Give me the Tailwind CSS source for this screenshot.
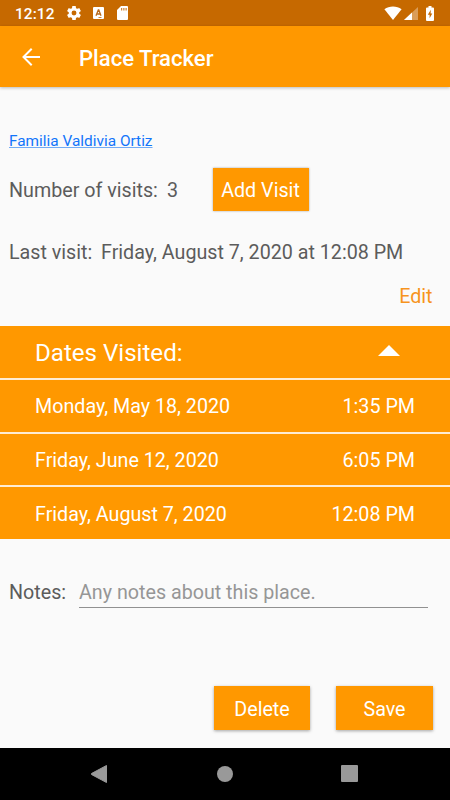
<!DOCTYPE html>
<html lang="en">
<head>
<meta charset="utf-8">
<title>Place Tracker</title>
<script src="https://cdn.jsdelivr.net/npm/@tailwindcss/browser@4"></script>
</head>
<body class="w-[450px] h-[800px] overflow-hidden bg-[#fafafa] font-['Roboto',sans-serif] text-[19.7px] leading-6 text-[#5c5c5c] flex flex-col">
<header class="h-[26px] shrink-0 bg-[#c66900] text-white flex items-center pl-[15px] pr-[16px]">
  <span class="text-[15.4px] font-medium leading-5 tracking-[0.1px] w-[52px] pt-[2px]">12:12</span>
  <svg class="w-[14px] h-[14px] shrink-0" viewBox="2 2 20 20" fill="currentColor"><path d="M19.43 12.98c.04-.32.07-.64.07-.98s-.03-.66-.07-.98l2.11-1.65c.19-.15.24-.42.12-.64l-2-3.46c-.12-.22-.39-.3-.61-.22l-2.49 1c-.52-.4-1.08-.73-1.69-.98l-.38-2.65C14.46 2.18 14.25 2 14 2h-4c-.25 0-.46.18-.49.42l-.38 2.65c-.61.25-1.17.59-1.69.98l-2.49-1c-.23-.09-.49 0-.61.22l-2 3.46c-.13.22-.07.49.12.64l2.11 1.65c-.04.32-.07.65-.07.98s.03.66.07.98l-2.11 1.65c-.19.15-.24.42-.12.64l2 3.46c.12.22.39.3.61.22l2.49-1c.52.4 1.08.73 1.69.98l.38 2.65c.03.24.24.42.49.42h4c.25 0 .46-.18.49-.42l.38-2.65c.61-.25 1.17-.59 1.69-.98l2.49 1c.23.09.49 0 .61-.22l2-3.46c.12-.22.07-.49-.12-.64zM12 15.5a3.5 3.5 0 1 1 0-7 3.5 3.5 0 0 1 0 7z"/></svg>
  <svg class="w-[11px] h-[12px] ml-[12px] shrink-0" viewBox="0 0 11 12"><rect width="11" height="12" rx="1" fill="#fff"/><path d="M3 8.7 5.3 3h.5L8 8.700M3.9 7h3.200" fill="none" stroke="#b86a1c" stroke-width="1.300"/><path d="M5.500 10.500h3" stroke="#c66900" stroke-width=".8"/></svg>
  <svg class="w-[11px] h-[14px] ml-[13px] shrink-0" viewBox="0 0 11 14"><path d="M4 0h6q1 0 1 1v12q0 1-1 1H1q-1 0-1-1V4z" fill="#fff"/><path d="M4.700 2v2.500M6.900 2v2.500M9.100 2v2.500" stroke="#c66900" stroke-width="1"/></svg>
  <svg class="w-[18px] h-[14px] ml-auto shrink-0" viewBox="0 0 18 14" fill="currentColor"><path d="M.4 3.300C5.300-.5 12.700-.5 17.600 3.300L9 14z"/></svg>
  <svg class="w-[14px] h-[13px] ml-[2px] mt-[1px] shrink-0" viewBox="0 0 14 13"><path d="M14 0v13H0z" fill="#fff" opacity=".35"/><path d="M8 5.570V13H0z" fill="#fff"/></svg>
  <svg class="w-[8px] h-[15px] ml-[8.500px] shrink-0" viewBox="0 0 8 15"><path d="M2.500 0h3v1.400H7q1 0 1 1V14q0 1-1 1H1q-1 0-1-1V2.400q0-1 1-1h1.500z" fill="#fff"/><path d="M4.800 3.800 1.800 8.700h1.800v3.600L6.300 7.500H4.600z" fill="#c66900"/></svg>
</header>
<div class="h-[61px] shrink-0 bg-[#ff9800] text-white flex items-center pl-[22px] shadow-[0_1px_3px_rgba(0,0,0,0.25)]">
  <svg class="w-[18px] h-[18px]" viewBox="0 0 18 18" fill="none" stroke="currentColor" stroke-width="2"><path d="M18 9H1.500M9.700.8 1.500 9l8.200 8.200"/></svg>
  <h1 class="ml-[39px] text-[22.1px] leading-7 font-medium whitespace-nowrap pt-[3px]"><span>Place Tracker</span></h1>
</div>
<main class="h-[661px] shrink-0 flex flex-col">
  <a class="mt-[44px] ml-[9px] h-5 leading-5 text-[15.4px] text-[#1275fa] self-start underline decoration-1 underline-offset-1 decoration-[#1877f2]/60">Familia Valdivia Ortiz</a>
  <div class="mt-[16px] pl-[9px] h-11 flex items-center">
    <span class="w-[158px] pt-[3px]">Number of visits:</span>
    <span class="w-[45.500px] pt-[3px]">3</span>
    <button class="w-[96px] h-[43px] pt-[3px] bg-[#ff9800] text-white shadow-[0_0_2px_rgba(0,0,0,0.35)]">Add Visit</button>
  </div>
  <div class="mt-[30px] pl-[9px] h-6 flex whitespace-nowrap">
    <span class="w-[92px]">Last visit:</span>
    <span>Friday, August 7, 2020 at 12:08 PM</span>
  </div>
  <a class="mt-[20px] mr-[17.500px] self-end text-[#f7941d] h-6">Edit</a>
  <section class="mt-[17px] bg-[#ff9800] text-white divide-y-2 divide-[#ffecd2] shrink-0">
    <div class="h-[54px] flex items-center justify-between pl-[35px] pr-[50px]"><h2 class="text-[24.100px] leading-7 pt-[2px]"><span>Dates Visited:</span></h2><svg class="w-[22px] h-[11px] -mt-[3px]" viewBox="0 0 22 11" fill="currentColor"><path d="M0 11 11 0l11 11z"/></svg></div>
    <div class="h-[54px] flex items-center justify-between pl-[35px] pr-[35px] pt-[2px]"><span>Monday, May 18, 2020</span><span>1:35 PM</span></div>
    <div class="h-[53px] flex items-center justify-between pl-[35px] pr-[35px] pt-[3px]"><span>Friday, June 12, 2020</span><span>6:05 PM</span></div>
    <div class="h-[52px] flex items-center justify-between pl-[35px] pr-[35px] pt-[3px]"><span>Friday, August 7, 2020</span><span>12:08 PM</span></div>
  </section>
  <div class="mt-[42px] pl-[9px] flex h-[28px]">
    <span class="w-[70px]">Notes:</span>
    <span class="w-[349px] h-[27px] border-b border-[#919191] text-[#969696]">Any notes about this place.</span>
  </div>
  <div class="mt-auto mb-[18px] pr-[17px] flex justify-end gap-[26px] text-white">
    <button class="w-[96px] h-[44px] pt-[3px] bg-[#ff9800] shadow-[0_1px_3px_rgba(0,0,0,0.35)]">Delete</button>
    <button class="w-[97px] h-[44px] pt-[3px] bg-[#ff9800] shadow-[0_1px_3px_rgba(0,0,0,0.35)]">Save</button>
  </div>
</main>
<nav class="h-[52px] shrink-0 bg-black flex items-center pl-[91px] text-[#999]">
  <svg class="w-[16px] h-[18px]" viewBox="0 0 16 18" fill="currentColor"><path d="M15.500.5v17L.5 9.500v-1z" stroke="currentColor" stroke-linejoin="round"/></svg>
  <span class="w-4 h-4 rounded-full bg-[#999] ml-[110px] -mt-px"></span>
  <span class="w-[17px] h-[17px] rounded-[1px] bg-[#999] ml-[108px] -mt-px"></span>
</nav>
</body>
</html>
